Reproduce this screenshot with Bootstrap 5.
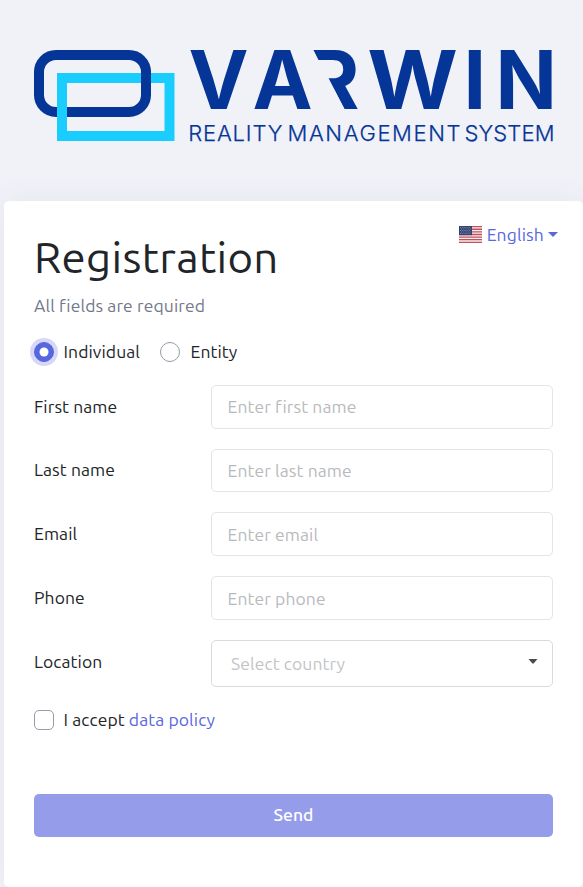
<!DOCTYPE html>
<html lang="en">
<head>
<meta charset="utf-8">
<meta name="viewport" content="width=device-width, initial-scale=1">
<title>Registration</title>
<link href="https://cdn.jsdelivr.net/npm/bootstrap@5.3.0/dist/css/bootstrap.min.css" rel="stylesheet">
<style>
html{overflow:hidden}
body{background:#f1f2f8;color:#212529;font-family:Ubuntu,"Noto Sans",sans-serif;font-size:17.5px;line-height:26px;letter-spacing:.1px}
.brand{height:201px;padding:50px 0 0 34px}
.brand svg{width:520px;height:92px;overflow:visible}
.panel{height:686px;margin-left:4px;border-radius:5px;box-shadow:0 0 30px rgba(82,63,105,.07);padding:0 30px}
.accent,.accent:hover{color:#5867dd}
.lang{top:20.5px;right:25px;gap:5px;letter-spacing:.15px}
.lang .dropdown-toggle::after{margin-left:4px;vertical-align:4px;border-top-width:5px;border-left-width:5px;border-right-width:5px}
.title{font-size:43.75px;line-height:52px;padding-top:30px;letter-spacing:.33px}
.hint{color:#74788d;margin-top:10px}
.choices{margin-top:20px;gap:19.5px}
.opt{gap:9.5px}
.choices .opt+.opt{gap:11px}
.opt .form-check-input{width:20px;height:20px;border-color:#959cab}
.opt .form-check-input[type=checkbox]{border-radius:5px}
.opt .form-check-input:checked{background-color:#5867dd;border-color:#5867dd;box-shadow:0 0 0 4px #d5d9f7}
.fields{margin-top:19.9px;display:grid;gap:20px}
.line{grid-template-columns:177px 1fr}
.line label{margin-top:-.3px}
.line .place{margin-top:-3px}
.field{height:43.75px;border:1px solid #e2e5ec;border-radius:5px;padding:0 15.5px;font-size:17.5px;letter-spacing:.1px}
.field::placeholder{color:#b9babd}
.picker{height:47px;border:1px solid #d9dadd;border-radius:5px;padding:1px 14px 0 19px;color:#c3c4c6;background:#fff;font-size:17.5px;letter-spacing:.1px}
.picker svg{margin-top:-4px}
.agree{margin-top:20px}
.send{height:43px;margin-top:61px;background:#959deb;color:#fff;border:0;border-radius:5px;font-size:17.5px;font-weight:500;line-height:42px;padding:0 0 1px;letter-spacing:0}
</style>
</head>
<body>
<header class="brand">
<svg viewBox="0 0 520 92" role="img" aria-label="Varwin">
<defs><clipPath id="cut"><path d="M279 -1H330V60H311L294.5 28V10H284.5Z"/></clipPath></defs>
<rect x="5" y="5" width="107" height="57" rx="17" fill="none" stroke="#053597" stroke-width="10"/>
<path d="M28 28H135.5V86H28Z" fill="none" stroke="#1acdff" stroke-width="10"/>
<path d="M112 20V45" stroke="#053597" stroke-width="10"/>
<g fill="#053597" font-family="Inter,sans-serif" letter-spacing="0">
<g font-size="80.5" font-weight="700">
<text y="58.5" x="154.5 218.5">VA</text>
<g clip-path="url(#cut)"><text x="272.5" y="58.5">R</text></g>
<text transform="translate(333.2 58.5) scale(1.085 1)">W</text>
<text y="58.5" x="429.5 461.5">IN</text>
</g>
<g font-size="22" font-weight="300" stroke="#053597" stroke-width=".25">
<text x="154.3" y="90.5" textLength="94">REALITY</text>
<text x="253.5" y="90.5" textLength="173">MANAGEMENT</text>
<text x="430.5" y="90.5" textLength="90">SYSTEM</text>
</g>
</g>
</svg>
</header>
<main class="panel bg-white position-relative">
<div class="lang dropdown position-absolute d-flex align-items-center">
<svg width="23" height="17" viewBox="0 0 23 17">
<path fill="#f5eeee" d="M0 0h23v17H0z"/>
<path d="M0 .65h23M0 3.27h23M0 5.9h23M0 8.5h23M0 11.1h23M0 13.7h23M0 16.35h23" stroke="#c2515d" stroke-width="1.3"/>
<path fill="#354470" d="M0 0h13v9.2H0z"/>
<path d="M1 1.5h11M2 3h10M1 4.5h11M2 6h10M1 7.5h11" stroke="#8c98b4" stroke-width=".8" stroke-dasharray="1 1.2"/>
</svg>
<a href="#" class="dropdown-toggle accent text-decoration-none" data-bs-toggle="dropdown">English</a>
</div>
<h1 class="title fw-normal mb-0">Registration</h1>
<p class="hint mb-0">All fields are required</p>
<form>
<div class="choices d-flex">
<label class="opt d-flex align-items-center"><input class="form-check-input m-0" type="radio" name="kind" checked>Individual</label>
<label class="opt d-flex align-items-center"><input class="form-check-input m-0" type="radio" name="kind">Entity</label>
</div>
<div class="fields">
<div class="line d-grid align-items-center"><label for="first">First name</label><input id="first" class="field form-control" placeholder="Enter first name"></div>
<div class="line d-grid align-items-center"><label for="last">Last name</label><input id="last" class="field form-control" placeholder="Enter last name"></div>
<div class="line d-grid align-items-center"><label for="email">Email</label><input id="email" class="field form-control" placeholder="Enter email"></div>
<div class="line d-grid align-items-center"><label for="phone">Phone</label><input id="phone" class="field form-control" placeholder="Enter phone"></div>
<div class="line d-grid align-items-center"><label class="place" for="country">Location</label>
<button id="country" type="button" class="picker d-flex align-items-center justify-content-between">Select country<svg width="10" height="5" viewBox="0 0 10 5"><path fill="#4b4b4b" d="M.5 0h9L5.8 4.3q-.8.8-1.6 0z"/></svg></button></div>
</div>
<div class="agree opt d-flex align-items-center"><input id="agree" class="form-check-input m-0" type="checkbox"><label for="agree">I accept <a href="#" class="accent text-decoration-none">data policy</a></label></div>
<button type="button" class="send btn w-100">Send</button>
</form>
</main>
<script src="https://cdn.jsdelivr.net/npm/bootstrap@5.3.0/dist/js/bootstrap.bundle.min.js"></script>
</body>
</html>
